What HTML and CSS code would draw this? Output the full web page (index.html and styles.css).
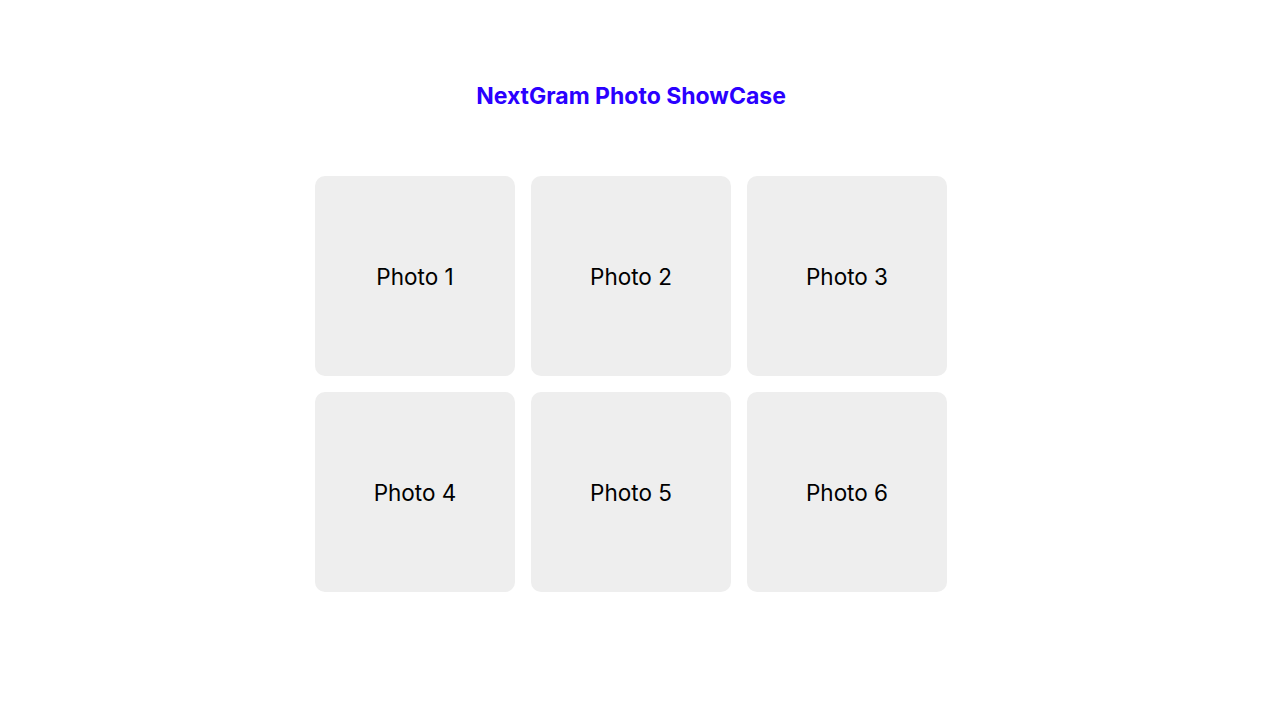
FILE: index.html
```html
<!DOCTYPE html>
<html lang="en">
<head>
<meta charset="utf-8">
<title>NextGram Photo ShowCase</title>
<link rel="stylesheet" href="styles.css">
</head>
<body>
<main class="page">
  <h1 class="title">NextGram Photo ShowCase</h1>
  <div class="grid">
    <div class="card">Photo 1</div>
    <div class="card">Photo 2</div>
    <div class="card">Photo 3</div>
    <div class="card">Photo 4</div>
    <div class="card">Photo 5</div>
    <div class="card">Photo 6</div>
  </div>
</main>
</body>
</html>
```
FILE: styles.css
```css
html, body {
  margin: 0;
  padding: 0;
  background: #ffffff;
}
body {
  font-family: Inter, "Noto Sans", sans-serif;
  color: #000;
  padding-right: 11px;
}
.page {
  display: flex;
  flex-direction: column;
  align-items: center;
  padding-top: 80px;
}
.title {
  margin: 0;
  font-size: 23px;
  line-height: 32px;
  font-weight: 700;
  color: #2a00ff;
}
.grid {
  margin-top: 64px;
  display: grid;
  grid-template-columns: repeat(3, 200px);
  grid-auto-rows: 200px;
  gap: 16px;
}
.card {
  background: #eeeeee;
  border-radius: 10px;
  display: flex;
  align-items: center;
  justify-content: center;
  font-size: 22.5px;
  font-weight: 400;
}
```
